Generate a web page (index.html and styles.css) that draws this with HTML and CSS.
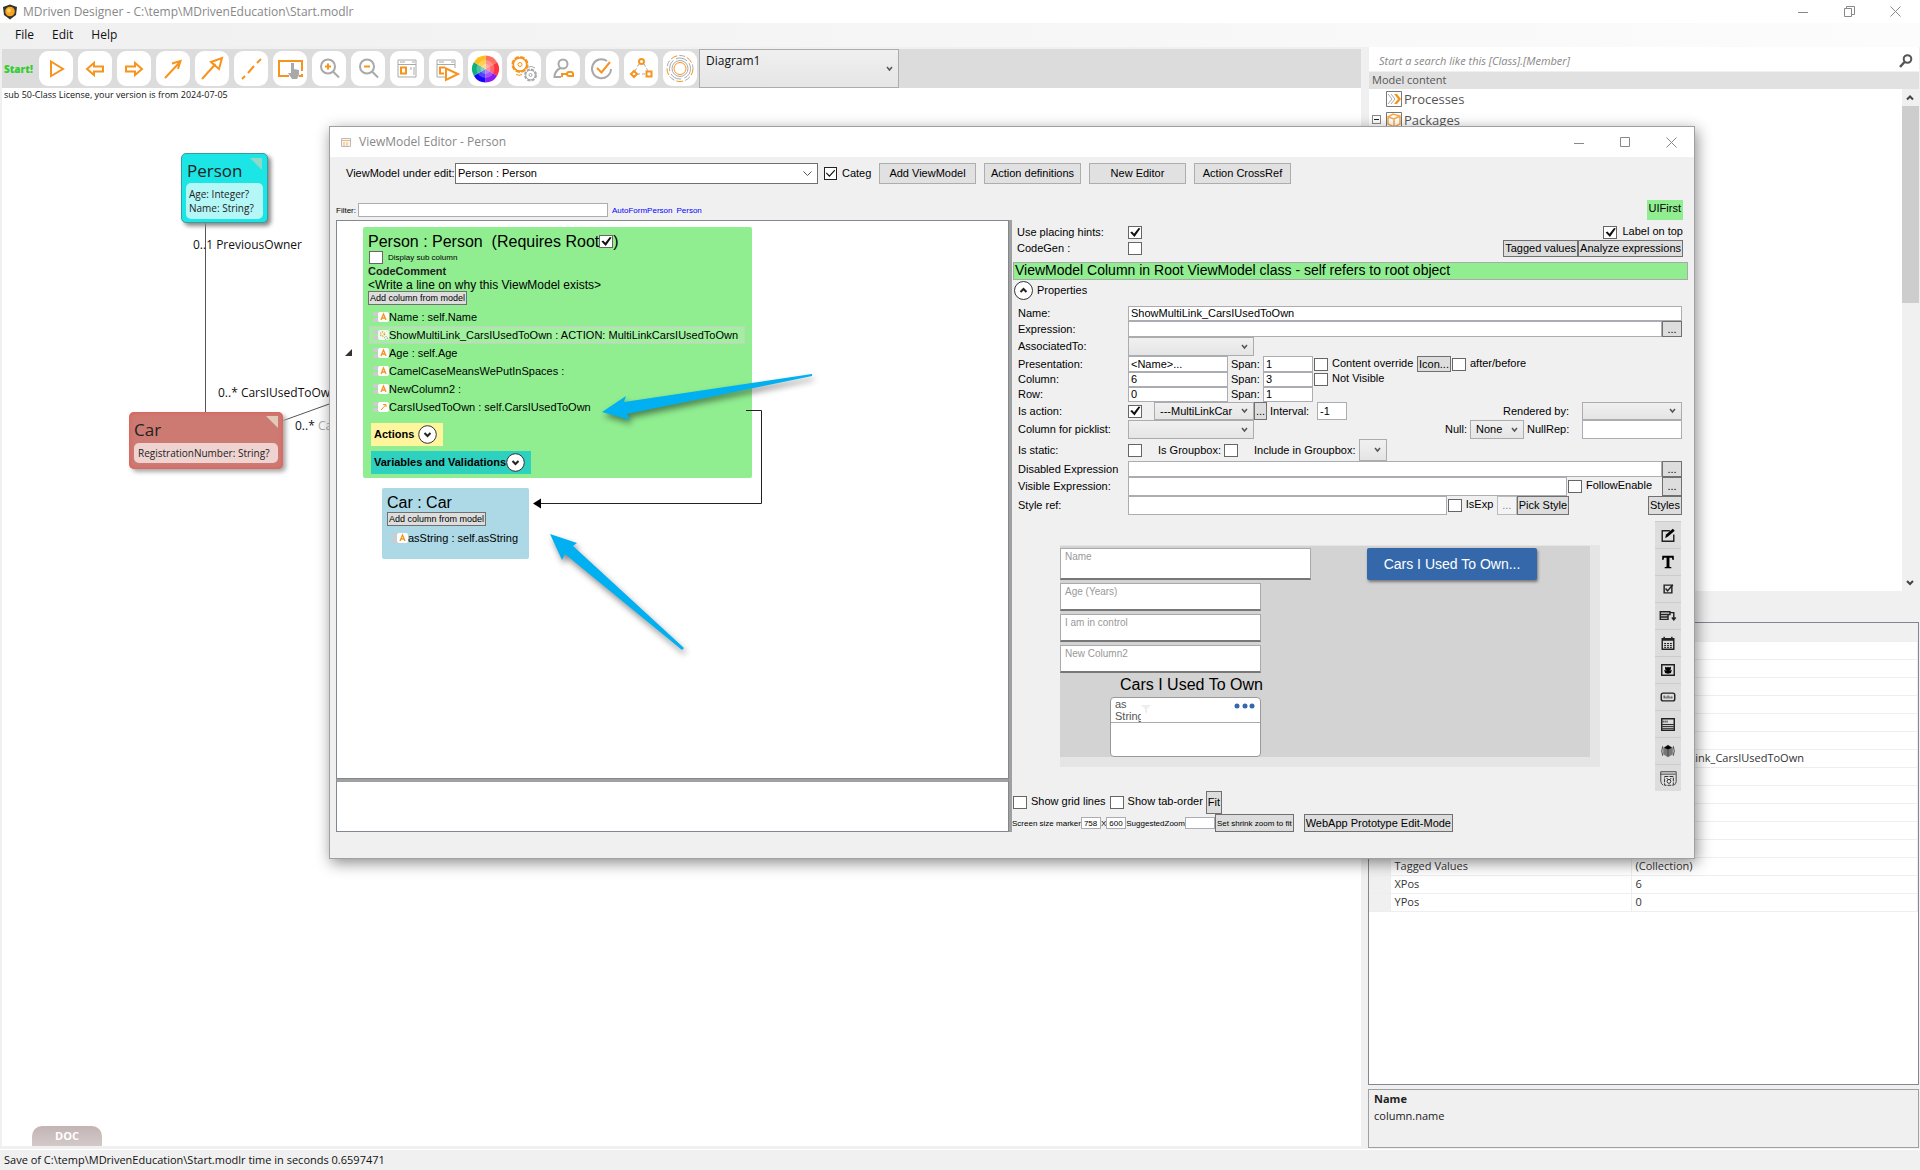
FILE: index.html
```html
<!DOCTYPE html>
<html lang="en">
<head>
<meta charset="utf-8">
<title>MDriven Designer</title>
<link rel="stylesheet" href="styles.css">
</head>
<body>
<svg class="defs" aria-hidden="true">
  <symbol id="i-attr" viewBox="0 0 16 11"><path d="M0 0h5v4H0zM0 6h5v4H0z" fill="#ccc"/><rect x="5" width="11" height="10" rx="2" fill="#fff"/><path d="M8 8l2.500-6L13 8M9 6h3" fill="none" stroke="#f7941d" stroke-width="1.300"/></symbol>
  <symbol id="i-act" viewBox="0 0 16 11"><path d="M0 0h5v4H0zM0 6h5v4H0z" fill="#ccc"/><rect x="5" width="11" height="10" rx="2" fill="#fff" fill-opacity=".8"/><circle cx="9.500" cy="4" r="2" fill="none" stroke="#f7941d" stroke-width="1.500" stroke-dasharray="1 1"/><circle cx="13" cy="8" r="1.500" fill="none" stroke="#999" stroke-dasharray="1 1"/></symbol>
  <symbol id="i-link" viewBox="0 0 16 11"><path d="M0 0h5v4H0zM0 6h5v4H0z" fill="#ccc"/><rect x="5" width="11" height="10" rx="2" fill="#fff"/><path d="M8 8l4.500-5M10 2.500h3V5" fill="none" stroke="#f7941d"/></symbol>
  <symbol id="i-down" viewBox="0 0 19 19"><circle cx="9.500" cy="9.500" r="8.800" fill="#fff" stroke="#333"/><path d="M6.500 8l3 3 3-3" fill="none" stroke="#222" stroke-width="2"/></symbol>
</svg>

<div class="app">
  <header class="titlebar">
    <svg width="16" height="16" viewBox="0 0 16 16"><path d="M1 3l7-2.500L15 3l-1 8-6 4.500L2 11z" fill="#333"/><circle cx="8" cy="7.500" r="4.800" fill="#f9a51a"/><circle cx="7" cy="6.500" r="2" fill="#fdd06b"/></svg>
    <h1>MDriven Designer - C:\temp\MDrivenEducation\Start.modlr</h1>
    <div class="winbtns">
      <button aria-label="Minimize"><svg width="11" height="11"><path d="M0 6.500h10" stroke="#888"/></svg></button>
      <button aria-label="Restore"><svg width="11" height="11"><path d="M.5 2.500h7v8h-7zM2.500 2.500v-2h8v8h-3" fill="none" stroke="#888"/></svg></button>
      <button aria-label="Close"><svg width="11" height="11"><path d="M.5.5l10 10m0-10l-10 10" stroke="#888"/></svg></button>
    </div>
  </header>
  <nav class="menu"><a href="#">File</a><a href="#">Edit</a><a href="#">Help</a></nav>

  <div class="work">
    <main class="designer">
      <div class="tools">
        <a class="start" href="#">Start!</a>
        <button aria-label="Run"><svg viewBox="0 0 34 35"><path class="o" d="M12 10.500L24 18 12 25z"/></svg></button>
        <button aria-label="Back"><svg viewBox="0 0 34 35"><path class="o" d="M9 18l7-6v3.500h9v5h-9V24z"/></svg></button>
        <button aria-label="Forward"><svg viewBox="0 0 34 35"><path class="o" d="M25 18l-7-6v3.500H9v5h9V24z"/></svg></button>
        <button aria-label="Association"><svg viewBox="0 0 34 35"><path class="o" d="M9 27l15-16M16 12.500l8.500-2.500L22 18"/></svg></button>
        <button aria-label="Generalization"><svg viewBox="0 0 34 35"><path class="o" d="M7 28l13.500-15M16 11l11-4-3 11z"/></svg></button>
        <button aria-label="Association class"><svg viewBox="0 0 34 35"><path class="o" d="M8 28l3-3m3-3l6-7m3-3l4-4"/></svg></button>
        <button aria-label="Select"><svg viewBox="0 0 34 35"><path class="o" d="M16 25H6V10h23v10m0 3v2h-3"/><path d="M18 12h3v6l5 1v5l-2 4h-5l-4-6h3z" fill="#a9a9a9"/></svg></button>
        <button aria-label="Zoom in"><svg viewBox="0 0 34 35"><circle class="g" cx="16" cy="15.500" r="7"/><path class="g" d="M21 20.500l6 6"/><path class="o" d="M13 15.500h6m-3-3v6"/></svg></button>
        <button aria-label="Zoom out"><svg viewBox="0 0 34 35"><circle class="g" cx="16" cy="15.500" r="7"/><path class="g" d="M21 20.500l6 6"/><path class="o" d="M13 15.500h6"/></svg></button>
        <button aria-label="ViewModels"><svg viewBox="0 0 34 35"><path class="g t" d="M8 9h18v17H8zM8 13.500h18M10 11h5m7 0h3m-1 5v8m-3-8v3"/><path class="o" d="M11 16.500h5v6h-5z"/></svg></button>
        <button aria-label="Run ViewModel"><svg viewBox="0 0 34 35"><path class="g t" d="M17 26H8V9h18v8M8 13.500h18M10 11h5m7 0h3"/><path class="o" d="M15 22.500h-4v-6h5"/><path class="o" fill="#fff" d="M17 17.500l12 5.500-12 6z"/></svg></button>
        <button aria-label="Colors"><svg viewBox="0 0 34 35"><path d="M17.500 18V4.500a13.500 13.500 0 0 1 11.700 6.750z" fill="#ff6f61"/><path d="M17.500 18l11.700-6.750a13.500 13.500 0 0 1 0 13.500z" fill="#ff3440"/><path d="M17.500 18l11.700 6.750a13.500 13.500 0 0 1-11.700 6.750z" fill="#8a1cf5"/><path d="M17.500 18v13.500a13.500 13.500 0 0 1-11.700-6.750z" fill="#1508fb"/><path d="M17.500 18L5.800 24.750a13.500 13.500 0 0 1 0-13.500z" fill="#10b07e"/><path d="M17.500 18L5.800 11.250A13.500 13.500 0 0 1 17.500 4.500z" fill="#fdbf1e"/><circle cx="17.500" cy="18" r="9" fill="#fff" fill-opacity=".25"/><circle cx="17.500" cy="18" r="5" fill="#fff" fill-opacity=".25"/></svg></button>
        <button aria-label="Actions"><svg viewBox="0 0 34 35"><circle class="o" cx="13" cy="13.500" r="7.500" stroke-dasharray="4.400 1.500"/><circle class="o" cx="13" cy="13.500" r="6.500"/><circle cx="13" cy="13.500" r="5.800" fill="#fff"/><circle class="o t" cx="13" cy="13.500" r="2"/><circle class="g" cx="23.500" cy="24" r="5.500" stroke-dasharray="3 1.300"/><circle class="g t" cx="23.500" cy="24" r="4.800"/><circle class="g t" cx="23.500" cy="24" r="1.500"/><path class="g t" d="M21 16q4-1.500 7 1"/><path class="o t" d="M9 23.500q3 1.500 6 0"/></svg></button>
        <button aria-label="Access"><svg viewBox="0 0 34 35"><circle class="g" cx="17" cy="13" r="4.500"/><path class="g" d="M14.500 17q-6 3-6 9H15"/><path class="o" d="M15 23h6m-5 0v3m5-3a2 2 0 0 1 2-2h2q2 0 2 2v2H23q-2 0-2-2"/></svg></button>
        <button aria-label="Validate"><svg viewBox="0 0 34 35"><path class="g" d="M22 10a9.500 9.500 0 1 0 4 8"/><path class="o" d="M12 17l4.500 4.500L25 11"/></svg></button>
        <button aria-label="States"><svg viewBox="0 0 34 35"><path class="g t" d="M15 13l-4 7m9-7l4 7M13 23h9" stroke-dasharray="3 2"/><circle class="o" cx="17.500" cy="10.500" r="2.500"/><path class="o" d="M10 20l3 3-3 3-3-3zM22.500 20.500h5v5h-5z"/></svg></button>
        <button aria-label="Services"><svg viewBox="0 0 34 35"><circle class="o t" cx="17" cy="17.500" r="6"/><circle class="g t" cx="17" cy="17.500" r="8"/><circle class="g t" cx="17" cy="17.500" r="10.500" stroke-dasharray="12 3"/><circle class="o t" cx="17" cy="17.500" r="13" stroke-dasharray="7 10"/><circle class="g t" cx="17" cy="17.500" r="13" stroke-dasharray="6 11" stroke-dashoffset="8"/></svg></button>
        <select class="diagram-pick" aria-label="Diagram"><option>Diagram1</option></select>
      </div>
      <div class="canvas">
        <p class="license">sub 50-Class License, your version is from 2024-07-05</p>
        <svg class="links" width="340" height="400"><path d="M203.500 130v200M280 333l50-18" stroke="#555" fill="none"/></svg>
        <section class="node person">
          <h2>Person</h2>
          <div class="attrs">Age: Integer?<br>Name: String?</div>
        </section>
        <section class="node car">
          <h2>Car</h2>
          <div class="attrs">RegistrationNumber: String?</div>
        </section>
        <span class="role r1">0..1 PreviousOwner</span>
        <span class="role r2">0..* CarsIUsedToOwn</span>
        <span class="role r3">0..* <i>Cars</i></span>
        <button class="doc">DOC</button>
      </div>
    </main>

    <aside class="side">
      <div class="search">
        <input type="text" aria-label="Search" placeholder="Start a search like this [Class].[Member]">
        <svg width="14" height="14" viewBox="0 0 14 14"><circle cx="8.500" cy="5" r="3.800" fill="none" stroke="#555" stroke-width="2"/><path d="M5.500 8L1 13" stroke="#555" stroke-width="2.500"/></svg>
      </div>
      <h2 class="side-head">Model content</h2>
      <div class="tree">
        <ul>
          <li><span class="box none"></span><svg width="16" height="16"><path d="M.5.500h15v15H.5z" fill="#fff" stroke="#777"/><path d="M2 3l4 5-4 5M5 3l4 5-4 5" fill="none" stroke="#aaa"/><path d="M8 3h3l4 5-4 5H8l4-5z" fill="#f7941d"/></svg>Processes</li>
          <li><span class="box"></span><svg width="16" height="16"><path d="M.5.500h15v15H.5z" fill="#fff" stroke="#777"/><path d="M2 5l5-3 7 2v8l-6 3-6-3zM2 5l6 2 6-3M8 7v8" fill="none" stroke="#f7a94d" stroke-width="1.500"/></svg>Packages</li>
        </ul>
        <div class="scroll"><svg width="16" height="17"><path d="M5 10.500l3-3 3 3" fill="none" stroke="#444" stroke-width="2"/></svg><span class="thumb"></span><svg width="16" height="17"><path d="M5 7l3 3 3-3" fill="none" stroke="#444" stroke-width="2"/></svg></div>
      </div>
      <div class="props">
        <table>
          <thead><tr><th></th><th></th><th></th></tr></thead>
          <tbody>
            <tr><th></th><td></td><td></td></tr><tr><th></th><td></td><td></td></tr><tr><th></th><td></td><td></td></tr>
            <tr><th></th><td></td><td></td></tr><tr><th></th><td></td><td></td></tr><tr><th></th><td></td><td></td></tr>
            <tr><th></th><td>Name</td><td>ShowMultiLink_CarsIUsedToOwn</td></tr>
            <tr><th></th><td></td><td></td></tr><tr><th></th><td></td><td></td></tr><tr><th></th><td></td><td></td></tr>
            <tr><th></th><td></td><td></td></tr><tr><th></th><td></td><td></td></tr>
            <tr><th></th><td>Tagged Values</td><td>(Collection)</td></tr>
            <tr><th></th><td>XPos</td><td>6</td></tr>
            <tr><th></th><td>YPos</td><td>0</td></tr>
          </tbody>
        </table>
      </div>
      <div class="help"><b>Name</b><span>column.name</span></div>
    </aside>
  </div>
  <footer class="status">Save of C:\temp\MDrivenEducation\Start.modlr time in seconds 0.6597471</footer>
</div>

<div class="dialog" role="dialog" aria-labelledby="dlg-title">
  <header class="dlg-title">
    <svg width="10" height="9"><path d="M.5.500h9v8h-9z" fill="#fdf3e6" stroke="#bbb"/><path d="M1 2.500h8M3 4v4m3-4v4" stroke="#e9b98a"/></svg>
    <h2 id="dlg-title">ViewModel Editor - Person</h2>
    <div class="winbtns">
      <button aria-label="Minimize"><svg width="11" height="11"><path d="M0 6.500h10" stroke="#888"/></svg></button>
      <button aria-label="Maximize"><svg width="11" height="11"><path d="M.5.500h9v9h-9z" fill="none" stroke="#888"/></svg></button>
      <button aria-label="Close"><svg width="11" height="11"><path d="M.5.5l10 10m0-10l-10 10" stroke="#888"/></svg></button>
    </div>
  </header>
  <div class="dlg-tools">
    <div class="under"><label for="vm">ViewModel under edit:</label><select id="vm"><option>Person : Person</option></select></div>
    <label class="categ"><input type="checkbox" class="thin" checked>Categ</label>
    <button>Add ViewModel</button><button>Action definitions</button><button>New Editor</button><button>Action CrossRef</button>
  </div>

  <div class="dlg-body">
    <section class="left">
      <div class="filter"><label for="flt">Filter:</label><input id="flt" type="text"><a href="#">AutoFormPerson</a><a href="#">Person</a></div>
      <div class="panes">
        <div class="vm-canvas">
          <svg class="expander" width="7" height="7"><path d="M7 0v7H0z" fill="#333"/></svg>
          <div class="vms">
            <article class="vm green">
              <h3>Person : Person&nbsp; (Requires Root<input type="checkbox" aria-label="Requires root" checked>)</h3>
              <label class="sub"><input type="checkbox">Display sub column</label>
              <b class="cc">CodeComment</b>
              <p>&lt;Write a line on why this ViewModel exists&gt;</p>
              <button class="add">Add column from model</button>
              <ul>
                <li><svg><use href="#i-attr"/></svg>Name : self.Name</li>
                <li class="sel"><svg><use href="#i-act"/></svg>ShowMultiLink_CarsIUsedToOwn : ACTION: MultiLinkCarsIUsedToOwn</li>
                <li><svg><use href="#i-attr"/></svg>Age : self.Age</li>
                <li><svg><use href="#i-attr"/></svg>CamelCaseMeansWePutInSpaces :</li>
                <li><svg><use href="#i-attr"/></svg>NewColumn2 :</li>
                <li><svg><use href="#i-link"/></svg>CarsIUsedToOwn : self.CarsIUsedToOwn</li>
              </ul>
              <button class="fold yellow">Actions<svg><use href="#i-down"/></svg></button>
              <button class="fold teal">Variables and Validations<svg><use href="#i-down"/></svg></button>
            </article>
            <article class="vm blue">
              <h3>Car : Car</h3>
              <button class="add">Add column from model</button>
              <ul><li><svg><use href="#i-attr"/></svg>asString : self.asString</li></ul>
            </article>
          </div>
          <svg class="arrows" width="500" height="440">
            <path d="M409 189.500h15.500v93H204" fill="none" stroke="#222"/>
            <path d="M196 282.500l8-5v10z"/>
            <g class="callout"><path d="M265 191l24-16-2 6 188-28v2L290 193l3 6z"/><path d="M213 313l27 9-4 3 111 102-2 2L228 333l-3 6z"/></g>
          </svg>
        </div>
        <div class="lower"></div>
      </div>
    </section>

    <section class="right">
      <div class="head">
        <div class="opts">
          <label for="uph">Use placing hints:</label><input id="uph" type="checkbox" checked>
          <label for="cg">CodeGen :</label><input id="cg" type="checkbox">
        </div>
        <div class="ops">
          <span class="uifirst">UIFirst</span>
          <label><input type="checkbox" checked>Label on top</label>
          <div><button>Tagged values</button><button>Analyze expressions</button></div>
        </div>
      </div>
      <div class="banner">ViewModel Column in Root ViewModel class - self refers to root object</div>
      <button class="prop-fold"><svg width="19" height="19"><circle cx="9.500" cy="9.500" r="9" fill="#fff" stroke="#333"/><path d="M6.500 11l3-3 3 3" fill="none" stroke="#222" stroke-width="2"/></svg>Properties</button>

      <form class="form">
        <div class="row h15"><label for="f1">Name:</label><input id="f1" class="grow" type="text" value="ShowMultiLink_CarsIUsedToOwn"></div>
        <div class="row h16"><label for="f2">Expression:</label><input id="f2" class="grow" type="text"><button type="button" class="dots">...</button></div>
        <div class="row h19"><label for="f3">AssociatedTo:</label><select id="f3" class="w126"><option></option></select></div>
        <div class="row h16"><label for="f4">Presentation:</label><input id="f4" class="w100" type="text" value="&lt;Name&gt;..."><label class="span" for="s1">Span:</label><input id="s1" class="w50" type="text" value="1"><label class="chk w104"><input type="checkbox">Content override</label><button type="button">Icon...</button><label class="chk"><input type="checkbox">after/before</label></div>
        <div class="row h15"><label for="f5">Column:</label><input id="f5" class="w100" type="text" value="6"><label class="span" for="s2">Span:</label><input id="s2" class="w50" type="text" value="3"><label class="chk"><input type="checkbox">Not Visible</label></div>
        <div class="row h15"><label for="f6">Row:</label><input id="f6" class="w100" type="text" value="0"><label class="span" for="s3">Span:</label><input id="s3" class="w50" type="text" value="1"></div>
        <div class="row h18"><label for="f7">Is action:</label><input id="f7" type="checkbox" checked><select class="w100 act" aria-label="Action"><option>---MultiLinkCar</option></select><button type="button" class="dots thin">...</button><label class="span wide" for="s4">Interval:</label><input id="s4" class="w30" type="text" value="-1"><label class="push" for="s5">Rendered by:</label><select id="s5" class="w100"><option></option></select></div>
        <div class="row h19"><label for="f8">Column for picklist:</label><select id="f8" class="w126"><option></option></select><label class="push near" for="s6">Null:</label><select id="s6" class="w54"><option>None</option></select><label class="rep" for="s7">NullRep:</label><input id="s7" class="w100" type="text"></div>
        <div class="row h22"><label for="f9">Is static:</label><input id="f9" type="checkbox"><label class="gb" for="s8">Is Groupbox:</label><input id="s8" type="checkbox"><label class="gb" for="s9">Include in Groupbox:</label><select id="s9" class="w28"><option></option></select></div>
        <div class="row h16"><label for="f10">Disabled Expression</label><input id="f10" class="grow" type="text"><button type="button" class="dots">...</button></div>
        <div class="row h19"><label for="f11">Visible Expression:</label><input id="f11" class="grow" type="text"><label class="chk w95"><input type="checkbox">FollowEnable</label><button type="button" class="dots">...</button></div>
        <div class="row h19"><label for="f12">Style ref:</label><input id="f12" class="grow" type="text"><label class="chk w50"><input type="checkbox">IsExp</label><button type="button" class="dots" disabled>...</button><button type="button" class="pick">Pick Style</button><button type="button">Styles</button></div>
      </form>

      <div class="design">
        <div class="preview">
          <div class="surface">
            <label class="fld big">Name<input type="text"></label>
            <button class="cars">Cars I Used To Own...</button>
            <label class="fld">Age (Years)<input type="text"></label>
            <label class="fld">I am in control<input type="text"></label>
            <label class="fld">New Column2<input type="text"></label>
            <h4>Cars I Used To Own</h4>
            <div class="grid"><div class="gh"><span>as<br>String</span><svg class="fun" width="10" height="9"><path d="M0 0h10L6 4v5L4 7V4z" fill="#eee"/></svg><svg width="22" height="6"><g fill="#3468ab"><circle cx="3" cy="3" r="2.500"/><circle cx="11" cy="3" r="2.500"/><circle cx="18" cy="3" r="2.500"/></g></svg></div></div>
          </div>
        </div>
        <div class="palette">
          <button aria-label="Edit"><svg viewBox="0 0 26 27"><path d="M15 9H7v11h12v-7" class="k"/><path d="M10 17l1-4 7-6 2 2-7 6z"/></svg></button>
          <button aria-label="Text"><svg viewBox="0 0 26 27"><path d="M7 7h12v4.500h-1.200L17 9h-2.500v9.500l2 .5v1h-7v-1l2-.5V9H9l-.8 2.500H7z"/></svg></button>
          <button aria-label="Check box"><svg viewBox="0 0 26 27"><path d="M9 9.500h8v8H9z" class="k"/><path d="M10.500 13l2 2.500L18 9" class="k"/></svg></button>
          <button aria-label="Drop-down"><svg viewBox="0 0 26 27"><path d="M5 9h10v3H5zm0 3v5h8v-5M5 14.500h8M15 10h4v7m-2-2l2 2.500 2-2.500" class="k"/></svg></button>
          <button aria-label="Date"><svg viewBox="0 0 26 27"><path d="M7 9h12v11H7zM7 10.500h12M9 7v2m8-2v2" class="k"/><path d="M9 14h8m-8 2h8m-8 2h8" stroke="#111" stroke-dasharray="2 1" fill="none"/></svg></button>
          <button aria-label="Image"><svg viewBox="0 0 26 27"><path d="M6.500 8h13v11h-13z" class="k"/><path d="M10 10l2 1 1-1 1 1 2-1v3l-2 1 3-.5-1 3-3 1-3-1-1-3 3 .5-2-1z"/></svg></button>
          <button aria-label="Button"><svg viewBox="0 0 26 27"><rect x="6" y="9.500" width="14" height="8" rx="2" class="k"/><path d="M9 12v3m2-2v2m2-3v3m2-2v2m2-2v2" stroke="#222"/></svg></button>
          <button aria-label="List"><svg viewBox="0 0 26 27"><path d="M6.500 8h13v12h-13z" class="k"/><path d="M8 10v2m2-2v2m2-2v2M7 14h12M7 16h12M7 18h12" stroke="#222"/></svg></button>
          <button aria-label="Component"><svg viewBox="0 0 26 27"><path d="M8 10l5-3 5 3v7l-5 3-5-3z" fill="#777"/><path d="M9 10l4-2.500 4 2.500-4 2z"/><path d="M7.500 8.500q-2 5 0 10m11-10q2 5 0 10M13 12v7" stroke="#444" fill="none"/></svg></button>
          <button aria-label="Page"><svg viewBox="0 0 26 27"><path d="M8 21q-2.500-2-2.500-4V7h16v10q0 2-2 4M5 9.500h16" stroke="#444" fill="none"/><path d="M9.500 12h9v9h-9z" fill="#eee" stroke="#222" stroke-dasharray="4 1"/><circle cx="14" cy="17" r="2" fill="none" stroke="#222"/><path d="M11.500 13.500l2 2m3-2l-2 2" stroke="#222"/></svg></button>
        </div>
      </div>

      <div class="foot1"><label class="chk"><input type="checkbox">Show grid lines</label><label class="chk"><input type="checkbox">Show tab-order</label><button>Fit</button></div>
      <div class="foot2"><label for="sw">Screen size marker</label><input id="sw" class="w19" type="text" value="758"><label for="sh">X</label><input id="sh" class="w19" type="text" value="600"><label for="sz">SuggestedZoom</label><input id="sz" class="w30" type="text"><button class="tiny">Set shrink zoom to fit</button><button class="web">WebApp Prototype Edit-Mode</button></div>
    </section>
  </div>
</div>
</body>
</html>
```

FILE: styles.css
```css
* { box-sizing: border-box; }
body {
  margin: 0;
  background: #f0f0f0;
  color: #111;
  font: 12px/14px "Open Sans", "Noto Sans", sans-serif;
}
h1, h2, h3, h4, p, ul { margin: 0; padding: 0; font: inherit; }
ul { list-style: none; }
button, input, select { font: inherit; color: inherit; margin: 0; padding: 0; }
button { white-space: nowrap; }
a { color: inherit; text-decoration: none; }
svg { flex: none; }
.defs { position: absolute; width: 0; height: 0; }

/* main window */
.app { display: flex; flex-direction: column; min-height: 100vh; }
.titlebar { display: flex; align-items: center; gap: 5px; height: 23px; padding: 0 2px; background: #fff; color: #888; }
.winbtns { display: flex; margin-left: auto; }
.winbtns button { display: flex; justify-content: center; align-items: center; width: 46px; height: 22px; border: 0; background: none; }
.menu { display: flex; gap: 18px; height: 24px; padding: 5px 15px; background: linear-gradient(90deg, #f0f0f0, #fcfcfc); }
.work { display: flex; flex: 1; gap: 8px; padding: 0 1px 0 2px; }
.designer { display: flex; flex: 1; flex-direction: column; padding: 2px 0 3px; min-width: 0; }
.tools { display: flex; align-items: center; gap: 5px; height: 39px; background: #dcdcdc; padding-left: 2px; }
.start { width: 30px; color: #32cd32; font-size: 10px; font-weight: 800; }
.tools button { width: 34px; height: 35px; border: 0; border-radius: 9px; background: #fff; }
.tools svg { display: block; width: 34px; height: 35px; }
.o, .g { fill: none; stroke-width: 2; }
.o { stroke: #f7941d; }
.g { stroke: #a9a9a9; }
.t { stroke-width: 1; }
path.o[fill] { fill: #fff; }
select {
  appearance: none;
  border: 1px solid #acacac;
  border-radius: 0;
  background: url("data:image/svg+xml,%3Csvg xmlns='http://www.w3.org/2000/svg' width='7' height='6'%3E%3Cpath d='M1 1l2.500 3L6 1' fill='none' stroke='%23555' stroke-width='1.500'/%3E%3C/svg%3E") right 5px center no-repeat, linear-gradient(#f0f0f0, #e5e5e5);
}
.tools .diagram-pick { width: 200px; height: 39px; margin-left: -3px; padding: 0 6px 16px; }
.canvas { position: relative; flex: 1; background: #fff; }
.license { padding: 0 2px; font-size: 9px; line-height: 14px; }
.links { position: absolute; left: 0; top: 0; }
.node { position: absolute; padding: 5px; border-radius: 5px; box-shadow: 3px 3px 4px #888; color: #222; }
.node::after { content: ""; position: absolute; right: 5px; top: 4px; border: 6px solid transparent; border-top-color: #e2c9b8; border-right-color: #e2c9b8; }
.node h2 { font-size: 17px; line-height: 24px; }
.attrs { padding: 4px 3px; border-radius: 5px; font-size: 10px; line-height: 14px; background: rgba(255, 255, 255, .67); white-space: nowrap; }
.person { left: 179px; top: 65px; width: 87px; height: 70px; background: #1ce5e5; border: 1px solid #3a9c9c; }
.person::after { border-top-color: #8ed8c8; border-right-color: #8ed8c8; }
.person .attrs { margin: 0 -1px; }
.car { left: 127px; top: 324px; width: 154px; height: 57px; background: #cd7a72; box-shadow: 3px 3px 4px #aaa, inset 0 0 4px #e7564e; }
.car h2 { line-height: 26px; }
.car .attrs { padding: 3px 4px; }
.role { position: absolute; white-space: nowrap; }
.role i { color: #aaa; font-style: normal; }
.r1 { left: 191px; top: 150px; }
.r2 { left: 216px; top: 298px; }
.r3 { left: 293px; top: 331px; }
.doc { position: absolute; left: 30px; bottom: 0; width: 70px; height: 20px; border: 0; border-radius: 10px 10px 0 0; background: linear-gradient(#c4b4b4, #d3c9c9); color: #fff; font-size: 11px; font-weight: 700; }
.status { height: 21px; padding: 3px 4px; border-top: 1px solid #fff; background: #f0f0f0; font-size: 11px; }

/* model tree and property grid */
.side { display: flex; flex-direction: column; width: 550px; color: #555; }
.search { display: flex; align-items: center; height: 24px; padding: 3px 6px 0 8px; background: #fff; }
.search input[type="text"] { flex: 1; border: 0; outline: 0; background: none; font-size: 11px; font-style: italic; }
.search input::placeholder { color: #888; }
.side-head { margin-top: 1px; padding: 1px 3px; height: 17px; background: #e1e1e1; font-size: 11px; line-height: 14px; }
.tree { display: flex; justify-content: space-between; height: 502px; background: #fff; }
.tree ul { margin-top: -1px; }
.tree li { display: flex; align-items: center; gap: 2px; height: 21px; padding-left: 3px; font-size: 13px; }
.box { width: 9px; height: 9px; margin-right: 3px; border: 1px solid #888; background: linear-gradient(#222, #222) center / 5px 1px no-repeat; }
.box.none { visibility: hidden; }
.scroll { display: flex; flex-direction: column; width: 17px; background: #f0f0f0; }
.thumb { height: 197px; margin-bottom: auto; background: #cdcdcd; }
.props { flex: 1; margin: 31px 0 4px -1px; border: 1px solid #828790; background: #fff; }
.props table { width: 100%; border-collapse: collapse; table-layout: fixed; font-size: 11px; line-height: 14px; color: #333; }
.props th, .props td { height: 18px; padding: 0 4px; border-bottom: 1px solid #eee; border-right: 1px solid #eee; text-align: left; }
.props th { width: 21px; background: #f0f0f0; font-weight: 400; }
.props thead th:nth-child(2) { width: 241px; }
.props thead th:nth-child(3) { width: auto; }
.help { display: flex; flex-direction: column; gap: 3px; height: 59px; margin: 0 0 1px -1px; padding: 2px 5px; border: 1px solid #a0a0a0; font-size: 11px; color: #222; }

/* view model editor window */
.dialog {
  position: absolute;
  left: 329px;
  top: 126px;
  right: 225px;
  border: 1px solid #a0a0a0;
  background: #f0f0f0;
  box-shadow: 2px 4px 14px rgba(0, 0, 0, .45);
  font: 11px/13px "Liberation Sans", Arial, sans-serif;
  color: #000;
}
.dlg-title { display: flex; align-items: center; gap: 8px; height: 30px; padding-left: 11px; background: #fff; color: #888; font: 12px/16px "Open Sans", "Noto Sans", sans-serif; }
.dlg-tools { display: flex; align-items: center; gap: 8px; padding: 6px 16px 16px; white-space: nowrap; }
.under { display: flex; flex: 0 0 472px; align-items: center; justify-content: space-between; }
.under select { width: 363px; height: 21px; padding: 0 2px; border-color: #707070; background-color: #fff; background-image: url("data:image/svg+xml,%3Csvg xmlns='http://www.w3.org/2000/svg' width='9' height='6'%3E%3Cpath d='M.5.500l4 4 4-4' fill='none' stroke='%23555'/%3E%3C/svg%3E"), none; }
.dlg-tools .categ { display: flex; align-items: center; gap: 5px; width: 47px; margin-left: -2px; }
.dlg-tools button { width: 97px; height: 21px; border: 1px solid #adadad; background: #e1e1e1; }
input[type="checkbox"] { appearance: none; flex: none; display: inline-block; width: 14px; height: 13px; border: 1px solid #666; background: #fff; }
input[type="checkbox"].thin { width: 13px; border-color: #222; }
input[type="checkbox"]:checked::before { content: ""; display: block; width: 100%; height: 100%; background: #111; clip-path: polygon(10% 50%, 25% 40%, 42% 62%, 80% 8%, 95% 14%, 46% 92%); }
input.thin:checked::before { clip-path: polygon(8% 48%, 15% 40%, 40% 66%, 86% 16%, 92% 24%, 40% 82%); }
input[type="text"] { min-width: 0; padding: 0 2px; border: 1px solid #abadb3; border-radius: 0; background: #fff; }

.dlg-body { display: flex; padding: 0 6px 26px; }
.left { display: flex; flex: 1; flex-direction: column; min-width: 0; padding-top: 3px; }
.filter { display: flex; align-items: center; gap: 4px; height: 14px; margin-bottom: 3px; font-size: 8px; }
.filter label { width: 18px; }
.filter input { width: 250px; height: 14px; }
.filter a { color: #00f; }
.panes { display: flex; flex: 1; flex-direction: column; border-right: 3px solid #a0a0a0; }
.vm-canvas { position: relative; display: flex; flex: 1; gap: 11px; padding: 6px 8px; border: 1px solid #828790; background: #fff; }
.expander { margin-top: 122px; }
.vms { display: flex; flex-direction: column; align-items: flex-start; gap: 10px; }
.vm { padding: 5px; border-radius: 2px; white-space: nowrap; }
.green { width: 389px; height: 251px; background: #90ee90; }
.blue { width: 147px; height: 71px; margin-left: 19px; background: #add8e6; }
.vm h3 { height: 19px; font-size: 16px; line-height: 19px; }
.vm h3 input { vertical-align: -1px; }
.sub { display: flex; align-items: center; gap: 5px; height: 13px; padding-left: 1px; font-size: 8px; }
.cc { display: block; height: 14px; line-height: 15px; color: #222; }
.vm p { height: 13px; line-height: 15px; font-size: 12px; }
.add { display: block; height: 14px; padding: 0 1px; border: 1px solid #707070; background: #ddd; font-size: 9px; line-height: 12px; }
.vm ul { padding: 3px 0 0 1px; }
.vm li { display: flex; align-items: center; width: max-content; height: 18px; padding: 0 6px 0 3px; border: 1px solid transparent; }
.vm li svg { width: 16px; height: 11px; }
.vm li.sel { background: rgba(255, 255, 255, .15); border-color: #ccc; }
.green ul { margin-bottom: 7px; }
.fold { display: flex; align-items: center; height: 23px; margin: 0 0 5px 3px; padding: 0 6px 0 3px; border: 0; font-weight: 700; }
.fold svg { width: 19px; height: 19px; }
.yellow { gap: 4px; background: #fff59d; }
.teal { background: #2ed0c0; }
.arrows { position: absolute; left: 0; top: 0; pointer-events: none; }
.callout { fill: #00b0f0; filter: drop-shadow(2px 4px 3px rgba(0, 0, 0, .45)); }
.lower { height: 53px; border: 1px solid #828790; border-top: 3px solid #a0a0a0; background: #fff; }

.right { width: 676px; }
.right button { border: 1px solid #707070; background: #ddd; padding: 0 1px; }
.head { display: flex; justify-content: space-between; align-items: flex-end; height: 57px; padding: 0 5px; }
.opts { display: grid; grid-template-columns: 111px 14px; row-gap: 3px; padding-bottom: 2px; }
.ops { display: flex; flex-direction: column; align-items: flex-end; gap: 1px; }
.uifirst { height: 20px; margin-bottom: 5px; padding: 2px; background: #90ee90; }
.ops label { display: flex; gap: 5px; height: 13px; line-height: 10px; }
.ops div { display: flex; }
.ops button { height: 17px; }
.banner { height: 18px; margin: 5px 0 1px 1px; padding: 0 1px; border: 1px solid #a9a9a9; background: #90ee90; font-size: 14px; line-height: 15px; }
.right .prop-fold { display: flex; align-items: center; gap: 4px; padding: 0 2px; border: 0; background: none; }

.form { margin: 6px 6px 0; }
.row { display: flex; align-items: stretch; white-space: nowrap; }
.row > label:first-child { flex: none; width: 110px; }
.row > label { align-self: center; }
.row > input[type="checkbox"] { align-self: center; }
.grow { flex: 1; }
.h15 { height: 15px; }
.h16 { height: 16px; }
.h18 { height: 18px; }
.h19 { height: 19px; }
.h22 { height: 22px; }
.w19 { width: 20px; }
.w28 { width: 28px; }
.w30 { width: 30px; }
.w50 { width: 50px; }
.w54 { width: 54px; }
.w95 { width: 95px; }
.w100 { width: 100px; }
.w104 { width: 104px; }
.w126 { width: 126px; }
.form select { padding: 0 5px; }
.form .dots { width: 20px; }
.form .dots.thin { width: 13px; padding: 0; }
.form button:disabled { border-color: #bbb; background: #f4f4f4; color: #888; }
.span { width: 35px; padding-left: 3px; }
.span.wide { width: 50px; }
.act { margin-left: 12px; }
.push { width: 79px; margin-left: auto; }
.push.near { width: 25px; }
.rep { width: 58px; padding-left: 3px; }
.gb { padding: 0 3px 0 16px; }
.chk { display: flex; gap: 4px; padding-left: 1px; line-height: 11px; }
.row .pick + button { margin-left: 79px; }

.design { display: flex; justify-content: space-between; margin-top: 6px; padding: 0 7px 0 48px; }
.preview { flex: 0 0 540px; height: 222px; margin-top: 24px; padding: 1px 10px 10px 0; background: #e5e5e5; }
.surface { display: grid; grid-template-columns: 201px 50px 170px; grid-template-rows: 32px 28px 28px 28px 18px 60px; column-gap: 0; row-gap: 3px; height: 211px; padding-top: 2px; background: #d3d3d3; }
.fld { display: flex; grid-column: 1; padding: 1px 4px; border: 1px solid #aaa; border-bottom: 2px solid #777; background: #fff; color: #999; font-size: 10px; }
.fld.big { grid-column: 1 / 3; }
.fld input[type="text"] { flex: 1; border: 0; }
.right .cars { grid-column: 3; width: 170px; margin-left: 56px; border: 0; border-radius: 2px; background: #3468ab; color: #fff; font-size: 14px; box-shadow: 1px 2px 3px #777; }
.surface h4 { grid-column: 1 / 3; padding-left: 60px; font-size: 16px; line-height: 18px; }
.grid { grid-column: 1; margin-left: 50px; border: 1px solid #999; border-radius: 4px; background: #fff; }
.gh { display: flex; align-items: flex-start; justify-content: space-between; height: 25px; padding: 0 4px; border-bottom: 1px solid #aaa; color: #555; font-size: 11px; line-height: 12px; }
.gh span { width: 26px; overflow: hidden; }
.gh svg { margin-top: 5px; }
.gh .fun { margin: 7px auto 0 0; }
.palette { display: flex; flex-direction: column; width: 26px; margin-left: 55px; }
.right .palette button { height: 27px; padding: 0; border: 0; border-top: 1px solid #ccc; background: #ddd; }
.palette svg { display: block; width: 26px; height: 26px; }
.k { fill: none; stroke: #222; stroke-width: 1.5; }
.foot1 { display: flex; align-items: center; gap: 3px; height: 23px; }
.foot1 button { height: 23px; }
.foot2 { display: flex; align-items: center; height: 18px; font-size: 8px; white-space: nowrap; }
.foot2 input { height: 12px; }
.foot2 button { height: 18px; }
.foot2 .web { margin-left: 10px; font-size: 11px; }
```
